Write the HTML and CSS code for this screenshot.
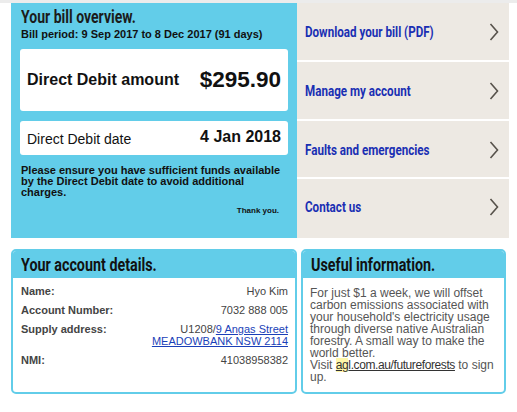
FILE: index.html
```html
<!DOCTYPE html>
<html>
<head>
<meta charset="utf-8">
<link rel="stylesheet" href="styles.css">
</head>
<body>
<div class="page">
  <div class="top">
    <section class="overview">
      <h1 class="heading"><span class="cond">Your bill overview.</span></h1>
      <p class="period">Bill period: 9 Sep 2017 to 8 Dec 2017 (91 days)</p>
      <div class="box box-amount">
        <span class="amount-label">Direct Debit amount</span>
        <span class="amount-value">$295.90</span>
      </div>
      <div class="box box-date">
        <span class="date-label">Direct Debit date</span>
        <span class="date-value">4 Jan 2018</span>
      </div>
      <p class="notice">Please ensure you have sufficient funds available by the Direct Debit date to avoid additional charges.</p>
      <p class="thanks">Thank you.</p>
    </section>
    <nav class="links">
      <a class="link-row" href="#"><span class="cond">Download your bill (PDF)</span><svg class="chev" viewBox="0 0 10 18" width="10" height="18"><path d="M1.5 1 L8.5 9 L1.5 17" fill="none" stroke="#57524b" stroke-width="1.6"/></svg></a>
      <a class="link-row" href="#"><span class="cond">Manage my account</span><svg class="chev" viewBox="0 0 10 18" width="10" height="18"><path d="M1.5 1 L8.5 9 L1.5 17" fill="none" stroke="#57524b" stroke-width="1.6"/></svg></a>
      <a class="link-row" href="#"><span class="cond">Faults and emergencies</span><svg class="chev" viewBox="0 0 10 18" width="10" height="18"><path d="M1.5 1 L8.5 9 L1.5 17" fill="none" stroke="#57524b" stroke-width="1.6"/></svg></a>
      <a class="link-row last" href="#"><span class="cond">Contact us</span><svg class="chev" viewBox="0 0 10 18" width="10" height="18"><path d="M1.5 1 L8.5 9 L1.5 17" fill="none" stroke="#57524b" stroke-width="1.6"/></svg></a>
    </nav>
  </div>
  <div class="bottom">
    <section class="card card-account">
      <h2 class="card-head"><span class="cond">Your account details.</span></h2>
      <div class="card-body">
        <div class="row"><span class="lbl">Name:</span><span class="val">Hyo Kim</span></div>
        <div class="row"><span class="lbl">Account Number:</span><span class="val">7032 888 005</span></div>
        <div class="row"><span class="lbl">Supply address:</span><span class="val">U1208/<a href="#">9 Angas Street<br>MEADOWBANK NSW 2114</a></span></div>
        <div class="row"><span class="lbl">NMI:</span><span class="val">41038958382</span></div>
      </div>
    </section>
    <section class="card card-info">
      <h2 class="card-head"><span class="cond">Useful information.</span></h2>
      <div class="card-body info-text">For just $1 a week, we will offset carbon emissions associated with your household's electricity usage through diverse native Australian forestry. A small way to make the world better.<br>Visit <a href="#"><mark>ag</mark>l.com.au/futureforests</a> to sign up.</div>
    </section>
  </div>
</div>
</body>
</html>
```
FILE: styles.css
```css
html, body { margin: 0; padding: 0; background: #fff; }
body { font-family: "Liberation Sans", Arial, sans-serif; border-top: 3px solid #ececec; }
.page { padding-left: 11px; width: 498px; }
.cond { display: inline-block; white-space: nowrap; transform: scaleX(0.78); transform-origin: left center; }
.top { display: flex; height: 235px; }
.overview { width: 286px; background: #62cde9; box-sizing: border-box; padding: 4px 9px 0 10px; color: #111; }
.heading { margin: 0; font-family: Roboto, sans-serif; font-weight: bold; font-size: 18px; line-height: 20px; color: #1b1b1b; }
.period { margin: 0; font-size: 11px; font-weight: bold; line-height: 14px; }
.box { background: #fff; border-radius: 3px; display: flex; justify-content: space-between; align-items: center; box-sizing: border-box; width: 268px; margin-left: -1px; padding: 0 7px; }
.box-amount { height: 62px; margin-top: 8px; }
.amount-label { font-weight: bold; font-size: 16px; }
.amount-value { font-weight: bold; font-size: 22.5px; }
.box-date { height: 34px; margin-top: 10px; align-items: flex-start; padding-top: 7px; }
.date-label { font-size: 14px; margin-top: 3px; }
.date-value { font-weight: bold; font-size: 16px; }
.notice { margin: 10px 0 0; font-size: 11px; font-weight: bold; line-height: 11px; }
.thanks { margin: 8px 9px 0 0; text-align: right; font-size: 8px; font-weight: bold; }
.links { width: 212px; display: flex; flex-direction: column; gap: 2px; }
.link-row { flex: 1; background: #ede9e3; display: flex; align-items: center; justify-content: space-between; padding: 2px 10px 0 8px; text-decoration: none; color: #1a2fb3; font-family: Roboto, sans-serif; font-weight: bold; font-size: 15px; }
.link-row .cond { transform: scaleX(0.775); }
.link-row.last { padding-top: 0; padding-bottom: 4px; }
.chev { display: block; }
.bottom { display: flex; gap: 4px; margin-top: 11px; }
.card { border: 2px solid #62cde9; border-radius: 5px; height: 145px; box-sizing: border-box; overflow: hidden; }
.card-account { width: 286px; }
.card-info { width: 205px; }
.card-head { margin: 0; background: #62cde9; height: 27px; padding: 4px 8px 0; box-sizing: border-box; font-family: Roboto, sans-serif; font-weight: bold; font-size: 18px; line-height: 20px; color: #111; }
.card-head .cond { transform: scaleX(0.795); }
.card-body { padding: 7px 7px 0 8px; font-size: 11px; color: #444; }
.row { display: flex; justify-content: space-between; line-height: 12px; margin-bottom: 7px; }
.lbl { font-weight: bold; }
.val { text-align: right; }
.val a { color: #1a3fb8; }
.info-text { font-size: 12px; line-height: 12px; color: #555; padding: 9px 2px 0 7px; }
.info-text a { color: #333; letter-spacing: -0.4px; }
mark { background: #fff7a8; color: inherit; }
```
